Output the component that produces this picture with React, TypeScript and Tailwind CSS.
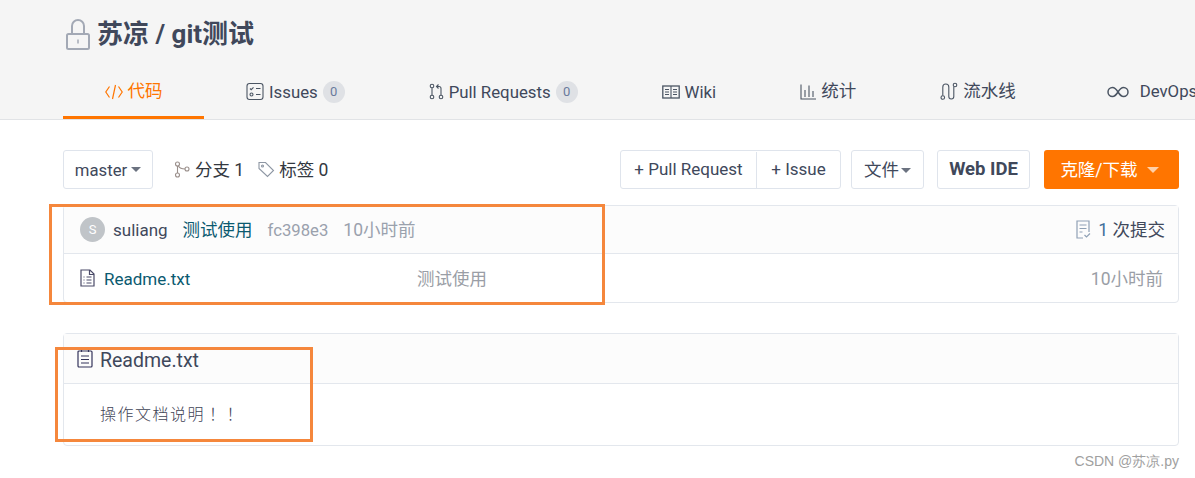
const Lock = () => (
  <svg width="26" height="31" viewBox="0 0 26 31" fill="none" stroke="#a3a9b5" strokeWidth="2">
    <rect x="2" y="15" width="22" height="15" rx="1.500" />
    <path d="M7 15V7a6 6 0 0 1 12 0v8" />
    <path d="M13 20.500v4" strokeWidth="1.500" />
  </svg>
);

const CodeIcon = () => (
  <svg width="18" height="16" viewBox="0 0 18 16" fill="none" stroke="#ff7500" strokeWidth="1.200">
    <path d="M4.500 2.500 0.800 8l3.700 5.500M13.500 2.500 17.200 8l-3.700 5.500M10.500 1 7.500 15" />
  </svg>
);

const IssueIcon = () => (
  <svg width="18" height="19" viewBox="0 0 18 19" fill="none" stroke="#4b5563" strokeWidth="1.100">
    <rect x="1" y="1.500" width="16" height="16" rx="2.500" />
    <path d="M4 6.500l1.200 1.200L7.500 5.300M10 6.500H14.500M10 12.500H14.500" />
    <circle cx="5.500" cy="12.500" r="1.500" />
  </svg>
);

const PullIcon = () => (
  <svg width="15" height="17" viewBox="0 0 15 17" fill="none" stroke="#4b5563" strokeWidth="1.100">
    <circle cx="3" cy="3" r="1.800" />
    <circle cx="3" cy="14" r="1.800" />
    <circle cx="12" cy="14" r="1.800" />
    <path d="M3 5v7M12 12V5.500a2 2 0 0 0-2-2H8M9.500 1.500 7.500 3.500l2 2" />
  </svg>
);

const WikiIcon = () => (
  <svg width="18" height="14" viewBox="0 0 18 14" fill="none" stroke="#4b5563" strokeWidth="1.300">
    <rect x="0.800" y="1" width="16.400" height="12" />
    <path d="M9 1v12M3 4.500h4M3 7h4M3 9.500h4M11 4.500h4M11 7h4M11 9.500h4" strokeWidth="1.100" />
  </svg>
);

const ChartIcon = () => (
  <svg width="16" height="16" viewBox="0 0 16 16" fill="none" stroke="#4b5563" strokeWidth="1.100">
    <path d="M1 0.500V15H16M5 13V6M9 13V1.500M13 13V7" />
  </svg>
);

const PipelineIcon = () => (
  <svg width="18" height="19" viewBox="0 0 18 19" fill="none" stroke="#4b5563" strokeWidth="1.100">
    <circle cx="2.800" cy="15.500" r="1.800" />
    <circle cx="15" cy="3" r="1.800" />
    <path d="M2.800 13.500V5a3 3 0 0 1 6 0v9.500a2.500 2.500 0 0 0 5 0V5" />
  </svg>
);

const DevOpsIcon = () => (
  <svg width="22" height="12" viewBox="0 0 22 12" fill="none" stroke="#4b5563" strokeWidth="1.500">
    <path d="M11 6C9 2.800 7.500 1.500 5.500 1.500a4.500 4.500 0 0 0 0 9C7.500 10.500 9 9.200 11 6c2-3.200 3.500-4.500 5.500-4.500a4.500 4.500 0 0 1 0 9c-2 0-3.500-1.300-5.500-4.500z" />
  </svg>
);

const BranchIcon = () => (
  <svg width="16" height="17" viewBox="0 0 16 17" fill="none" stroke="#9a8f8b" strokeWidth="1.100">
    <circle cx="3.500" cy="3" r="2" />
    <circle cx="3.500" cy="14" r="2" />
    <circle cx="13" cy="8" r="2" />
    <path d="M3.500 5v7M4.500 5c1 2 3 3 6.500 3" />
  </svg>
);

const TagIcon = () => (
  <svg width="17" height="17" viewBox="0 0 17 17" fill="none" stroke="#8d96a3" strokeWidth="1.100">
    <path d="M1 1.500h6.500l8 8-6 6-8.500-8z" />
    <circle cx="4.500" cy="5" r="1" />
  </svg>
);

const FileListIcon = () => (
  <svg width="15" height="18" viewBox="0 0 15 18" fill="none" stroke="#4a4a68" strokeWidth="1.200">
    <path d="M1 1h9l4 4v12H1zM9.500 1v4.500H14" />
    <path d="M3.500 8h1M6.500 8h5M3.500 11h1M6.500 11h5M3.500 14h1M6.500 14h5" />
  </svg>
);

const CommitIcon = () => (
  <svg width="16" height="19" viewBox="0 0 16 19" fill="none" stroke="#8fa0b5" strokeWidth="1.200">
    <path d="M7 18H1V1h12v11M3.500 5h7M3.500 8.500h7M3.500 12h3M8.500 15l2 2 3.500-3.500" />
  </svg>
);

const DocIcon = () => (
  <svg width="16" height="19" viewBox="0 0 16 19" fill="none" stroke="#33335a" strokeWidth="1.200">
    <rect x="1" y="2" width="14" height="16" rx="1" />
    <path d="M4.500 0.500v2.500M11.500 0.500v2.500M4 7h8M4 10.500h8M4 14h8" />
  </svg>
);

const Caret = ({ className }: { className: string }) => (
  <span className={`inline-block border-x-[5px] border-t-[5px] border-x-transparent ${className}`} />
);

const tabs = [
  { icon: <IssueIcon />, label: "Issues", latin: true, count: 0 },
  { icon: <PullIcon />, label: "Pull Requests", latin: true, count: 0 },
  { icon: <WikiIcon />, label: "Wiki", latin: true },
  { icon: <ChartIcon />, label: "统计" },
  { icon: <PipelineIcon />, label: "流水线" },
];

export default function App() {
  return (
    <div className="relative h-[478px] w-[1195px] overflow-hidden bg-white font-['Roboto','Noto_Sans_CJK_SC',sans-serif] text-[17.5px] text-[#40485b]">
      <header className="h-[120px] border-b border-[#e1e3e6] bg-[#f5f5f5] pl-[63px]">
        <div className="flex h-[68px] items-center gap-[6px] pl-[2px]">
          <Lock />
          <h1 className="text-[26px] leading-8 font-bold text-[#40485b]">苏凉 / git测试</h1>
        </div>
        <nav className="flex h-[51px] whitespace-nowrap">
          <a className="flex w-[141px] shrink-0 items-center justify-center gap-[5px] border-b-[3px] border-[#ff7500] pb-[1px] text-[#ff7500]">
            <CodeIcon />
            代码
          </a>
          {tabs.map((tab) => (
            <a key={tab.label} className="flex shrink-0 items-center gap-[5px] px-[42px] pb-[4px]">
              {tab.icon}
              <span className={tab.latin ? "pt-[2px] text-[16.8px]" : ""}>{tab.label}</span>
              {tab.count !== undefined && (
                <span className="flex h-[22px] w-[22px] items-center justify-center rounded-full bg-[#dfe1e5] text-[13px] text-[#6a7a9c]">
                  {tab.count}
                </span>
              )}
            </a>
          ))}
          <a className="ml-[44px] flex shrink-0 items-center gap-[11px] pb-[4px] pl-[5px] text-[16.8px]">
            <DevOpsIcon />
            DevOps
          </a>
        </nav>
      </header>

      <main className="pr-[16px] pl-[63px]">
        <div className="mt-[30px] flex h-[39px] items-center">
          <button className="flex h-full w-[90px] items-center justify-center gap-[4px] rounded-[3px] border border-[#dfe4ec]">
            <span className="pt-[2px] text-[16.7px]">master</span>
            <Caret className="border-t-[#6b7280]" />
          </button>
          <span className="ml-[21px] flex items-center gap-[5px] text-[#33383f]">
            <BranchIcon />
            <span className="pt-[2px]">分支 1</span>
          </span>
          <span className="ml-[14px] flex items-center gap-[4px] text-[#33383f]">
            <TagIcon />
            <span className="pt-[2px]">标签 0</span>
          </span>
          <div className="ml-auto flex h-full items-center">
            <div className="flex h-full rounded-[3px] border border-[#dfe4ec] pt-[1px] text-[17px]">
              <button className="w-[136px] border-r border-[#dfe4ec]">+ Pull Request</button>
              <button className="w-[83px]">+ Issue</button>
            </div>
            <button className="ml-[10px] flex h-full w-[73px] items-center justify-center gap-[2px] rounded-[3px] border border-[#dfe4ec] pt-[1px]">
              文件
              <Caret className="border-t-[#6b7280]" />
            </button>
            <button className="ml-[13px] h-full w-[93px] rounded-[3px] border border-[#dfe4ec] pt-[1px] text-[18.5px] font-bold">Web IDE</button>
            <button className="ml-[14px] flex h-full w-[135px] items-center justify-center gap-[9px] rounded-[3px] bg-[#ff7500] pt-[1px] pr-[4px] text-white">
              克隆/下载
              <span className="inline-block border-x-[6px] border-t-[6px] border-x-transparent border-t-[#ffd0a8]" />
            </button>
          </div>
        </div>

        <section className="mt-[16px] rounded-[4px] border border-[#e3e7ed]">
          <div className="flex h-[48px] items-center border-b border-[#e3e7ed] bg-[#fcfcfc] pr-[13px] pl-[16px]">
            <span className="flex h-[25px] w-[25px] items-center justify-center rounded-full bg-[#c0c4c8] text-[13px] text-white">S</span>
            <span className="ml-[8px] pt-[2px] text-[17px]">suliang</span>
            <span className="ml-[15px] pt-[2px] text-[#0b5a70]">测试使用</span>
            <span className="ml-[15px] pt-[2px] text-[16.7px] text-[#9aa1ad]">fc398e3</span>
            <span className="ml-[15px] pt-[2px] text-[#9aa1ad]">10小时前</span>
            <span className="ml-auto flex items-center gap-[6px]">
              <CommitIcon />
              <span className="pt-[2px]"><span className="text-[#3f6f9b]">1</span> 次提交</span>
            </span>
          </div>
          <div className="flex h-[48px] items-center pr-[15px] pl-[16px] text-[#9a9ea6]">
            <FileListIcon />
            <span className="ml-[9px] w-[313px] pt-[3px] text-[17px] text-[#0b5a70]">Readme.txt</span>
            <span className="pt-[3px]">测试使用</span>
            <span className="ml-auto pt-[3px]">10小时前</span>
          </div>
        </section>

        <section className="mt-[30px] h-[113px] rounded-[4px] border border-[#e3e7ed]">
          <div className="flex h-[50px] items-center gap-[7px] border-b border-[#e3e7ed] bg-[#fcfcfc] pl-[13px] text-[19.5px]">
            <DocIcon />
            <span className="pt-[5px]">Readme.txt</span>
          </div>
          <p className="pt-[17px] pl-[36px] font-['Noto_Sans_CJK_TC',sans-serif] text-[16px] font-light tracking-[1.5px] text-[#3f4456]">
            操作文档说明！！
          </p>
        </section>

        <div className="mt-[5px] text-right font-['Liberation_Sans',sans-serif] text-[14px] text-[#a0a0a0]">CSDN @苏凉.py</div>
      </main>

      <div className="absolute top-[204px] left-[49px] h-[101px] w-[556px] border-[3px] border-[#f5873c]" />
      <div className="absolute top-[347px] left-[55px] h-[95px] w-[258px] border-[3px] border-[#f5873c]" />
    </div>
  );
}
